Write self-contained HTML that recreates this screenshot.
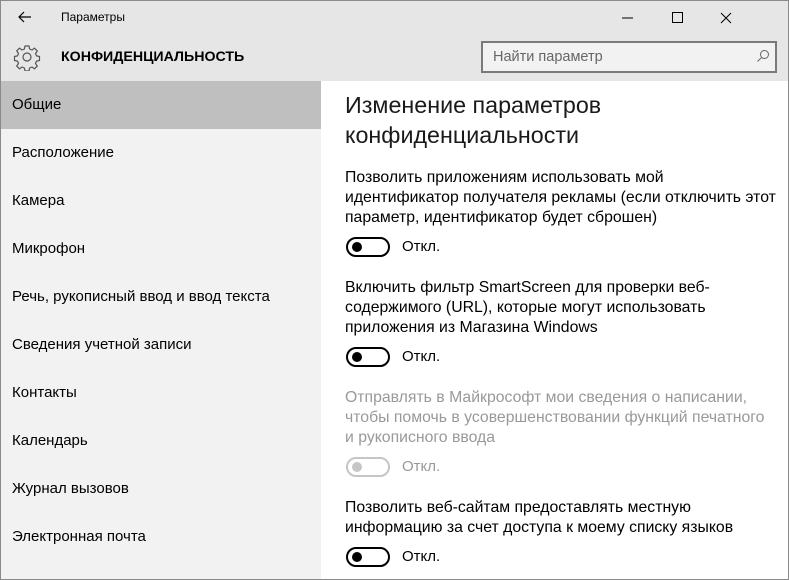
<!DOCTYPE html><html><head><meta charset="utf-8"><style>
body{margin:0;width:789px;height:580px;overflow:hidden;font-family:"Segoe UI","Liberation Sans","DejaVu Sans",sans-serif;color:#000;}
.win{position:absolute;left:0;top:0;width:787px;height:578px;border:1px solid #8a8a8a;background:#fff;overflow:hidden}
.hdr{position:absolute;left:0;top:0;width:787px;height:80px;background:#e6e6e6}
.left{position:absolute;left:0;top:80px;width:320px;height:500px;background:#f2f2f2}
.t{position:absolute;white-space:nowrap}
.item{position:absolute;left:0;width:320px;height:48px;line-height:48px;font-size:15px;padding-left:11px;box-sizing:border-box}
.p{position:absolute;left:344px;font-size:15.8px;line-height:20px;color:#000;white-space:nowrap}
.tg{position:absolute;left:345px;width:44px;height:20px;box-sizing:border-box;border:2px solid #000;border-radius:10px}
.tg:after{content:"";position:absolute;left:4px;top:3px;width:10px;height:10px;border-radius:5px;background:#000}
.tg.g{border-color:#c6c6c6}.tg.g:after{background:#c6c6c6}
.off{position:absolute;left:401px;font-size:15px;line-height:20px}
</style></head><body><div class="win">
<div class="hdr"></div>
<svg class="t" style="left:16px;top:8px" width="16" height="16" viewBox="0 0 16 16"><path d="M14 8H2M7 3L2 8l5 5" fill="none" stroke="#000" stroke-width="1.2"/></svg>
<div class="t" style="left:60px;top:8px;font-size:12px;line-height:16px">Параметры</div>
<svg class="t" style="left:616px;top:9px" width="160" height="16"><path d="M5 8h11" stroke="#000"/><rect x="55.5" y="2.5" width="10" height="10" fill="none" stroke="#000"/><path d="M104 3l10 10M114 3l-10 10" stroke="#000"/></svg>
<svg class="t" style="left:12px;top:42px" width="28" height="28" viewBox="0 0 28 28"><g fill="none" stroke="#555" stroke-width="1.2"><path d="M12 3h4l.6 3 2.4 1 2.5-1.8 2.8 2.8-1.8 2.5 1 2.4 3 .6v4l-3 .6-1 2.4 1.8 2.5-2.8 2.8-2.5-1.8-2.4 1-.6 3h-4l-.6-3-2.4-1-2.5 1.8-2.8-2.8 1.8-2.5-1-2.4-3-.6v-4l3-.6 1-2.4-1.8-2.5 2.8-2.8 2.5 1.8 2.4-1z"/><circle cx="14" cy="14" r="4"/></g></svg>
<div class="t" style="left:60px;top:46px;font-size:14.2px;font-weight:bold;line-height:20px">КОНФИДЕНЦИАЛЬНОСТЬ</div>
<div class="t" style="left:480px;top:40px;width:296px;height:32px;box-sizing:border-box;border:2px solid #7a7a7a;background:#f2f2f2"></div>
<div class="t" style="left:492px;top:47px;font-size:14.5px;line-height:18px;color:#666">Найти параметр</div>
<svg class="t" style="left:755px;top:48px" width="14" height="14"><circle cx="8.5" cy="5.5" r="4" fill="none" stroke="#666"/><path d="M5.5 8.5L1.5 12.5" stroke="#666"/></svg>
<div class="left"></div>
<div class="item" style="top:80px;background:#bfbfbf">Общие</div>
<div class="item" style="top:128px">Расположение</div>
<div class="item" style="top:176px">Камера</div>
<div class="item" style="top:224px">Микрофон</div>
<div class="item" style="top:272px">Речь, рукописный ввод и ввод текста</div>
<div class="item" style="top:320px">Сведения учетной записи</div>
<div class="item" style="top:368px">Контакты</div>
<div class="item" style="top:416px">Календарь</div>
<div class="item" style="top:464px">Журнал вызовов</div>
<div class="item" style="top:512px">Электронная почта</div>
<div class="p" style="top:89px;font-size:23.3px;line-height:30px;color:#1a1a1a">Изменение параметров<br>конфиденциальности</div>
<div class="p" style="top:167px">Позволить приложениям использовать мой<br>идентификатор получателя рекламы (если отключить этот<br>параметр, идентификатор будет сброшен)</div>
<div class="tg" style="top:236px"></div><div class="off" style="top:236px">Откл.</div>
<div class="p" style="top:277px">Включить фильтр SmartScreen для проверки веб-<br>содержимого (URL), которые могут использовать<br>приложения из Магазина Windows</div>
<div class="tg" style="top:346px"></div><div class="off" style="top:346px">Откл.</div>
<div class="p" style="top:387px;color:#999">Отправлять в Майкрософт мои сведения о написании,<br>чтобы помочь в усовершенствовании функций печатного<br>и рукописного ввода</div>
<div class="tg g" style="top:456px"></div><div class="off" style="top:456px;color:#999">Откл.</div>
<div class="p" style="top:497px">Позволить веб-сайтам предоставлять местную<br>информацию за счет доступа к моему списку языков</div>
<div class="tg" style="top:546px"></div><div class="off" style="top:546px">Откл.</div>
</div></body></html>
